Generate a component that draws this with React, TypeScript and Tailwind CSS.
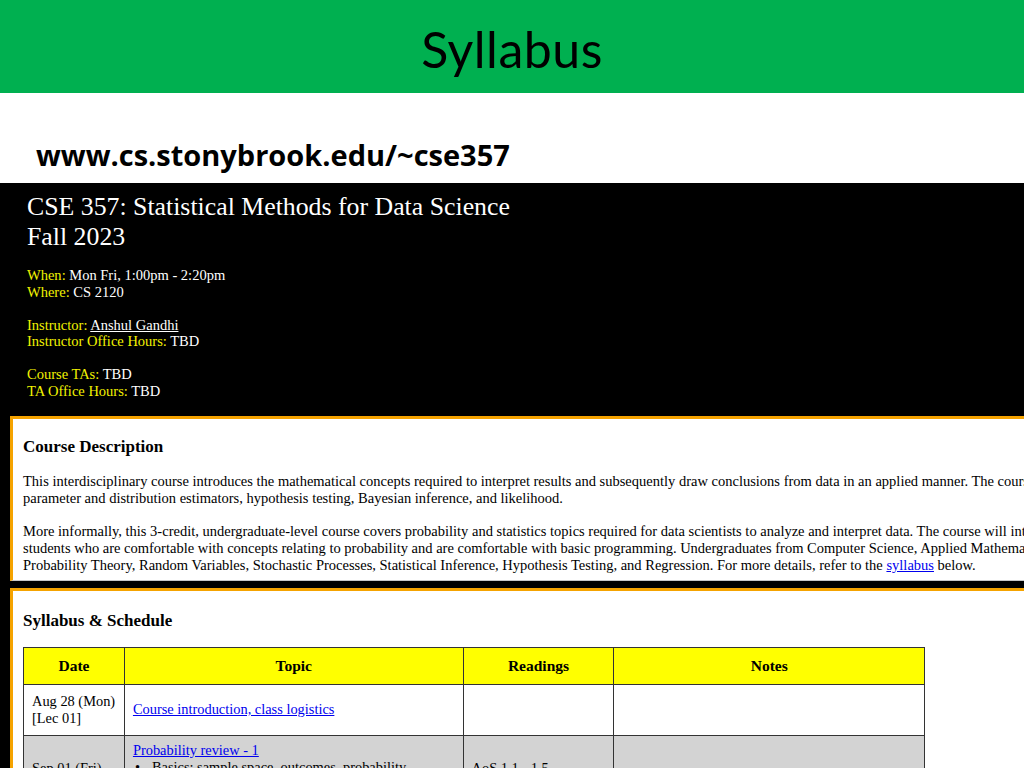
import React from "react";

const serif = { fontFamily: '"Liberation Serif", "Times New Roman", serif' };

function Label({ k, v }: { k: string; v: React.ReactNode }) {
  return (
    <div className="leading-[16.5px]">
      <span className="text-[#f2f200]">{k}: </span>
      <span className="text-white">{v}</span>
    </div>
  );
}

const cell = "border-[1.5px] border-[#333]";

export default function App() {
  return (
    <div className="w-[1024px] h-[768px] overflow-hidden flex flex-col bg-white">
      <header className="h-[93px] shrink-0 bg-[#00b050] flex items-center justify-center">
        <h1
          className="text-[50px] text-black leading-none pt-[4px] tracking-[0.5px]"
          style={{ fontFamily: 'Lato, "Open Sans", sans-serif' }}
        >
          Syllabus
        </h1>
      </header>
      <div className="h-[90px] shrink-0 flex items-end pl-[36px] pb-[10px]">
        <div
          className="text-[29px] font-bold leading-[36px] text-black"
          style={{ fontFamily: '"Open Sans", Lato, sans-serif' }}
        >
          www.cs.stonybrook.edu/~cse357
        </div>
      </div>
      <main className="flex-1 bg-black pl-[10px] pt-[9px]" style={serif}>
        <div className="pl-[17px] text-white">
          <div className="text-[25.8px] leading-[30px]">
            <div>CSE 357: Statistical Methods for Data Science</div>
            <div>Fall 2023</div>
          </div>
          <div className="text-[14.5px] mt-[15px]">
            <Label k="When" v="Mon Fri, 1:00pm - 2:20pm" />
            <Label k="Where" v="CS 2120" />
            <div className="h-[16.5px]" />
            <Label k="Instructor" v={<span className="underline">Anshul Gandhi</span>} />
            <Label k="Instructor Office Hours" v="TBD" />
            <div className="h-[16.5px]" />
            <Label k="Course TAs" v="TBD" />
            <Label k="TA Office Hours" v="TBD" />
          </div>
        </div>

        <section className="mt-[17px] bg-white border-t-[3px] border-l-[3px] border-[#f5a300] border-b border-b-[#c8c8c8] pl-[10px] pt-[18px] pb-[6px] text-black whitespace-nowrap overflow-hidden">
          <h2 className="text-[17px] font-bold leading-[20px]">Course Description</h2>
          <div className="text-[14.5px] leading-[17px] mt-[16px]">
            <p>
              This interdisciplinary course introduces the mathematical concepts required to interpret results and subsequently draw conclusions from data in an applied manner. The course covers
            </p>
            <p>parameter and distribution estimators, hypothesis testing, Bayesian inference, and likelihood.</p>
            <p className="mt-[16px]">
              More informally, this 3-credit, undergraduate-level course covers probability and statistics topics required for data scientists to analyze and interpret data. The course will introduce
            </p>
            <p>
              students who are comfortable with concepts relating to probability and are comfortable with basic programming. Undergraduates from Computer Science, Applied Mathematics
            </p>
            <p>
              Probability Theory, Random Variables, Stochastic Processes, Statistical Inference, Hypothesis Testing, and Regression. For more details, refer to the{" "}
              <a className="text-[#0000ee] underline">syllabus</a> below.
            </p>
          </div>
        </section>

        <section className="mt-[7px] bg-white border-t-[3px] border-l-[3px] border-[#f5a300] pl-[10px] pt-[20px] text-black">
          <h2 className="text-[17px] font-bold leading-[20px]">Syllabus &amp; Schedule</h2>
          <table className="mt-[16px] border-collapse text-[14.4px] w-[902px]">
            <colgroup>
              <col className="w-[101px]" />
              <col className="w-[339px]" />
              <col className="w-[151px]" />
              <col className="w-[311px]" />
            </colgroup>
            <thead>
              <tr className="bg-[#ffff00] h-[37px]">
                {["Date", "Topic", "Readings", "Notes"].map((h) => (
                  <th key={h} className={`${cell} text-[15.5px] font-bold text-center`}>
                    {h}
                  </th>
                ))}
              </tr>
            </thead>
            <tbody>
              <tr className="h-[51px]">
                <td className={`${cell} px-[8px] leading-[17px]`}>
                  Aug 28 (Mon)
                  <br />
                  [Lec 01]
                </td>
                <td className={`${cell} px-[8px]`}>
                  <a className="text-[#0000ee] underline">Course introduction, class logistics</a>
                </td>
                <td className={cell} />
                <td className={cell} />
              </tr>
              <tr className="bg-[#d3d3d3] h-[66px]">
                <td className={`${cell} px-[8px]`}>Sep 01 (Fri)</td>
                <td className={`${cell} px-[8px] align-top pt-[6px] leading-[17px]`}>
                  <a className="text-[#0000ee] underline">Probability review - 1</a>
                  <div className="flex">
                    <span className="w-[19px] pl-[2px]">•</span>
                    <span>Basics: sample space, outcomes, probability</span>
                  </div>
                  <div className="flex">
                    <span className="w-[19px] pl-[2px]">•</span>
                    <span>Conditional probability, Bayes</span>
                  </div>
                </td>
                <td className={`${cell} px-[8px]`}>AoS 1.1 - 1.5</td>
                <td className={cell} />
              </tr>
            </tbody>
          </table>
        </section>
      </main>
    </div>
  );
}
